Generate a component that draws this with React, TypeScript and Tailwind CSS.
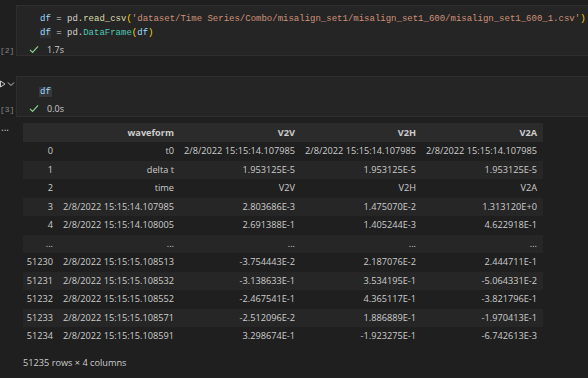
import React from 'react';

const rows: string[][] = [
  ['0', 't0', '2/8/2022 15:15:14.107985', '2/8/2022 15:15:14.107985', '2/8/2022 15:15:14.107985'],
  ['1', 'delta t', '1.953125E-5', '1.953125E-5', '1.953125E-5'],
  ['2', 'time', 'V2V', 'V2H', 'V2A'],
  ['3', '2/8/2022 15:15:14.107985', '2.803686E-3', '1.475070E-2', '1.313120E+0'],
  ['4', '2/8/2022 15:15:14.108005', '2.691388E-1', '1.405244E-3', '4.622918E-1'],
  ['...', '...', '...', '...', '...'],
  ['51230', '2/8/2022 15:15:15.108513', '-3.754443E-2', '2.187076E-2', '2.444711E-1'],
  ['51231', '2/8/2022 15:15:15.108532', '-3.138633E-1', '3.534195E-1', '-5.064331E-2'],
  ['51232', '2/8/2022 15:15:15.108552', '-2.467541E-1', '4.365117E-1', '-3.821796E-1'],
  ['51233', '2/8/2022 15:15:15.108571', '-2.512096E-2', '1.886889E-1', '-1.970413E-1'],
  ['51234', '2/8/2022 15:15:15.108591', '3.298674E-1', '-1.923275E-1', '-6.742613E-3'],
];

const Check = () => (
  <svg width="10" height="9" viewBox="0 0 10 9" fill="none">
    <path d="M1 4.8 L3.6 7.4 L9 1.4" stroke="#89d185" strokeWidth="1.2" />
  </svg>
);

const Status: React.FC<{ time: string }> = ({ time }) => (
  <div className="flex items-center gap-[8px] pl-[12px] text-[9px] text-[#cccccc]">
    <Check />
    <span>{time}</span>
  </div>
);

const App: React.FC = () => {
  const mono = { fontFamily: '"Liberation Mono", "DejaVu Sans Mono", monospace' };
  return (
    <div
      className="w-[588px] h-[378px] overflow-hidden bg-[#1f1f1f] text-[#cccccc]"
      style={{ fontFamily: '"Open Sans", "Noto Sans", sans-serif' }}
    >
      <div className="pt-[5px]" />
      {/* cell 2 */}
      <div className="flex">
        <div className="w-[16px] flex flex-col justify-end pb-[0px]">
          <span className="text-[8px] text-[#858585] leading-[10px]" style={mono}>[2]</span>
        </div>
        <div className="flex-1 h-[51px] bg-[#252525] border border-r-0 border-[#2e2e2e]">
          <div className="pl-[23px] pt-[6px] text-[9px] leading-[14px] whitespace-nowrap" style={mono}>
            <div>
              <span className="text-[#9cdcfe]">df</span>
              <span className="text-[#d4d4d4]"> = </span>
              <span className="text-[#d4d4d4]">pd.</span>
              <span className="text-[#dcdcaa]">read_csv</span>
              <span className="text-[#ffd700]">(</span>
              <span className="text-[#ce9178]">'dataset/Time Series/Combo/misalign_set1/misalign_set1_600/misalign_set1_600_1.csv'</span>
              <span className="text-[#ffd700]">)</span>
            </div>
            <div>
              <span className="text-[#9cdcfe] bg-[#2f3033]">df</span>
              <span className="text-[#d4d4d4]"> = </span>
              <span className="text-[#d4d4d4]">pd.</span>
              <span className="text-[#4ec9b0]">DataFrame</span>
              <span className="text-[#ffd700]">(</span>
              <span className="text-[#9cdcfe]">df</span>
              <span className="text-[#ffd700]">)</span>
            </div>
          </div>
          <div className="mt-[3px]">
            <Status time="1.7s" />
          </div>
        </div>
      </div>

      <div className="h-[20px]" />

      {/* cell 3 */}
      <div className="flex">
        <div className="w-[16px] flex flex-col justify-between pt-[4px] pb-[2px]">
          <div className="flex items-center gap-[1px]">
            <svg width="6" height="8" viewBox="0 0 6 8" fill="none">
              <path d="M0.5 1 L5 4 L0.5 7 Z" stroke="#c5c5c5" strokeWidth="1" />
            </svg>
            <svg width="8" height="6" viewBox="0 0 8 6" fill="none">
              <path d="M1 1.5 L4 4.5 L7 1.5" stroke="#c5c5c5" strokeWidth="1" />
            </svg>
          </div>
          <span className="text-[8px] text-[#858585] leading-[10px]" style={mono}>[3]</span>
        </div>
        <div className="flex-1 h-[41px] bg-[#252525] border border-r-0 border-[#2e2e2e]">
          <div className="pl-[23px] pt-[8px] text-[9px] leading-[14px]" style={mono}>
            <span className="text-[#9cdcfe] bg-[#36383b] px-[1px] -ml-[1px]">df</span>
          </div>
          <div className="mt-[3px]">
            <Status time="0.0s" />
          </div>
        </div>
      </div>

      {/* output */}
      <div className="flex pt-[6px]">
        <div className="w-[23px] text-[10px] leading-[8px] text-[#c5c5c5] pl-[1px]">...</div>
        <div className="text-[9.2px]">
          <div className="w-[520px]">
            <div className="flex h-[19px] items-center bg-[#2b2b2b] font-bold">
              <div className="w-[35px]" />
              <div className="w-[121px] text-right pr-[5px]">waveform</div>
              <div className="w-[121px] text-right pr-[5px]">V2V</div>
              <div className="w-[121px] text-right pr-[5px]">V2H</div>
              <div className="w-[122px] text-right pr-[6px]">V2A</div>
            </div>
            {rows.map((r, i) => (
              <div
                key={i}
                className={`flex h-[18.5px] items-center ${i % 2 === 1 ? 'bg-[#262626]' : 'bg-[#1f1f1f]'}`}
              >
                <div className="w-[35px] text-right pr-[5px]">{r[0]}</div>
                <div className="w-[121px] text-right pr-[5px]">{r[1]}</div>
                <div className="w-[121px] text-right pr-[5px]">{r[2]}</div>
                <div className="w-[121px] text-right pr-[5px]">{r[3]}</div>
                <div className="w-[122px] text-right pr-[6px]">{r[4]}</div>
              </div>
            ))}
          </div>
          <div className="mt-[10px] text-[9.2px]">51235 rows × 4 columns</div>
        </div>
      </div>
    </div>
  );
};

export default App;
